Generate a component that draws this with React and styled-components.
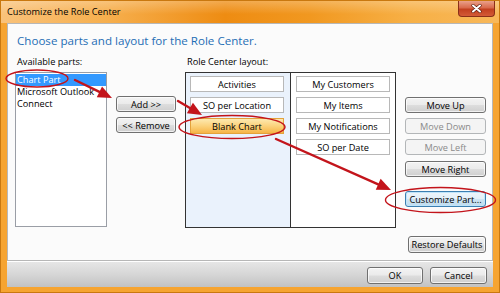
import React from 'react';
import styled, { createGlobalStyle, css } from 'styled-components';

const GlobalStyle = createGlobalStyle`
  html, body { margin: 0; padding: 0; background: #ffffff; }
  body { width: 500px; height: 293px; overflow: hidden; }
  * { box-sizing: border-box; }
`;

const Window = styled.div`
  position: relative;
  width: 500px;
  height: 293px;
  display: flex;
  flex-direction: column;
  background: #f6a431;
  border: 1px solid #c9780f;
  font-family: "Open Sans", "Noto Sans", sans-serif;
  font-size: 9.2px;
  color: #000000;
`;

const TitleBar = styled.div`
  height: 22px;
  flex: none;
  display: flex;
  justify-content: space-between;
  align-items: flex-start;
  padding: 0 4px 0 6px;
  background:
    linear-gradient(180deg, rgba(255,255,255,0.25) 0%, rgba(255,255,255,0) 60%),
    linear-gradient(90deg, #f9c27a 0%, #f6ae4c 22%, #ee8c12 45%, #f19820 62%, #f7b046 82%, #f8b85a 100%);
`;

const Title = styled.div`
  padding-top: 4px;
  font-size: 9.2px;
  line-height: 13px;
  color: #000;
`;

const CloseButton = styled.div`
  width: 37px;
  height: 16px;
  display: flex;
  align-items: center;
  justify-content: center;
  border: 1px solid #8a2f19;
  border-top: none;
  border-radius: 0 0 4px 4px;
  background: linear-gradient(180deg, #eaa08a 0%, #d86a4c 45%, #c2401f 55%, #d35b37 100%);
`;

const Client = styled.div`
  flex: none;
  height: 238px;
  margin: 0 6px;
  display: flex;
  flex-direction: column;
  background: #fbfbfb;
  border: 1px solid #b7b7b7;
  padding: 8px 6px 0 7px;
`;

const Heading = styled.div`
  margin-left: 2px;
  font-size: 11.6px;
  line-height: 18px;
  color: #1f6eb5;
`;

const Main = styled.div`
  display: flex;
  align-items: flex-start;
  margin-top: 5px;
`;

const Column = styled.div`
  flex: none;
  width: ${p => p.$width}px;
  margin-left: ${p => p.$gap || 0}px;
  display: flex;
  flex-direction: column;
`;

const Label = styled.div`
  padding-left: 2px;
  line-height: 14px;
  margin-bottom: 3px;
`;

const ListBox = styled.div`
  height: 155px;
  background: #ffffff;
  border: 1px solid #9a9ea6;
  padding-top: 1px;
`;

const ListItem = styled.div`
  line-height: 12px;
  padding-left: 1px;
  white-space: nowrap;
  ${p => p.$selected && css`
    background: #3399ff;
    color: #ffffff;
  `}
`;

const ButtonStack = styled.div`
  flex: none;
  width: ${p => p.$width}px;
  margin-left: 9px;
  padding-top: ${p => p.$top}px;
  display: flex;
  flex-direction: column;
  gap: 5px;
`;

const Button = styled.div`
  height: ${p => p.$height || 16}px;
  width: ${p => (p.$width ? `${p.$width}px` : 'auto')};
  margin-top: ${p => p.$offset || 0}px;
  display: flex;
  align-items: center;
  justify-content: center;
  white-space: nowrap;
  border: 1px solid #707070;
  border-radius: 3px;
  color: #000;
  background: linear-gradient(180deg, #f3f3f3 0%, #ebebeb 48%, #dddddd 52%, #cfcfcf 100%);
  box-shadow: inset 0 0 0 1px rgba(255,255,255,0.7);
  ${p => p.$disabled && css`
    border-color: #b3b6b8;
    color: #8a8a8a;
    background: #f4f4f4;
    box-shadow: none;
  `}
  ${p => p.$focused && css`
    border-color: #3c7fb1;
    background: linear-gradient(180deg, #eef6fb 0%, #e3eff8 48%, #cde4f3 52%, #c0dcef 100%);
    box-shadow: inset 0 0 0 1px #bfe4fa;
  `}
`;

const LayoutBox = styled.div`
  height: 156px;
  display: flex;
  border: 1px solid #333333;
  background: #ffffff;
`;

const Zone = styled.div`
  width: ${p => p.$width}px;
  flex: none;
  display: flex;
  flex-direction: column;
  gap: 5px;
  padding: 3px 0 0 ${p => p.$inset}px;
  background: ${p => (p.$tinted ? '#eaf2fc' : '#ffffff')};
  & + & { border-left: 1px solid #333333; }
`;

const Part = styled.div`
  width: 94px;
  height: 16px;
  display: flex;
  align-items: center;
  justify-content: center;
  white-space: nowrap;
  border: 1px solid #b8b8b8;
  background: #ffffff;
  ${p => p.$active && css`
    border-color: #e3a23c;
    background: linear-gradient(180deg, #fde9b0 0%, #fbd27c 50%, #f6b446 100%);
  `}
`;

const RestoreRow = styled.div`
  display: flex;
  justify-content: flex-end;
  margin-top: 8px;
`;

const Footer = styled.div`
  flex: none;
  height: 26px;
  margin: 0 6px;
  display: flex;
  justify-content: flex-end;
  align-items: flex-start;
  gap: 7px;
  padding: 5px 6px 0 0;
  border-top: 1px solid #ffffff;
  background: linear-gradient(180deg, #e6e6e6 0%, #d6d6d6 50%, #c2c2c2 100%);
`;

const Annotations = styled.svg`
  position: absolute;
  left: -1px;
  top: -1px;
  pointer-events: none;
`;

const RED = '#c3141b';

function Arrow({ x1, y1, x2, y2 }) {
  const a = Math.atan2(y2 - y1, x2 - x1);
  const len = 14;
  const half = 6;
  const bx = x2 - len * Math.cos(a);
  const by = y2 - len * Math.sin(a);
  const px = -Math.sin(a) * half;
  const py = Math.cos(a) * half;
  return (
    <g>
      <line x1={x1} y1={y1} x2={bx} y2={by} stroke={RED} strokeWidth="2.4" strokeLinecap="round" />
      <polygon points={`${x2},${y2} ${bx + px},${by + py} ${bx - px},${by - py}`} fill={RED} />
    </g>
  );
}

export default function App() {
  const available = ['Chart Part', 'Microsoft Outlook', 'Connect'];
  const left = ['Activities', 'SO per Location', 'Blank Chart'];
  const right = ['My Customers', 'My Items', 'My Notifications', 'SO per Date'];

  return (
    <>
      <GlobalStyle />
      <Window>
        <TitleBar>
          <Title>Customize the Role Center</Title>
          <CloseButton>
            <svg width="11" height="9" viewBox="0 0 11 9">
              <path d="M2 1.5 L9 7.5 M9 1.5 L2 7.5" stroke="#5a1a0c" strokeWidth="3.2" strokeLinecap="round" />
              <path d="M2 1.5 L9 7.5 M9 1.5 L2 7.5" stroke="#ffffff" strokeWidth="2" strokeLinecap="round" />
            </svg>
          </CloseButton>
        </TitleBar>

        <Client>
          <Heading>Choose parts and layout for the Role Center.</Heading>
          <Main>
            <Column $width={92}>
              <Label>Available parts:</Label>
              <ListBox>
                {available.map((name, i) => (
                  <ListItem key={name} $selected={i === 0}>{name}</ListItem>
                ))}
              </ListBox>
            </Column>

            <ButtonStack $width={60} $top={41}>
              <Button>Add &gt;&gt;</Button>
              <Button>&lt;&lt; Remove</Button>
            </ButtonStack>

            <Column $width={211} $gap={9}>
              <Label>Role Center layout:</Label>
              <LayoutBox>
                <Zone $width={104} $inset={4} $tinted>
                  {left.map(name => (
                    <Part key={name} $active={name === 'Blank Chart'}>{name}</Part>
                  ))}
                </Zone>
                <Zone $width={105} $inset={5}>
                  {right.map(name => <Part key={name}>{name}</Part>)}
                </Zone>
              </LayoutBox>
            </Column>

            <ButtonStack $width={81} $top={42}>
              <Button>Move Up</Button>
              <Button $disabled>Move Down</Button>
              <Button $disabled>Move Left</Button>
              <Button $offset={1}>Move Right</Button>
              <Button $offset={9} $focused>Customize Part...</Button>
            </ButtonStack>
          </Main>

          <RestoreRow>
            <Button $width={78} $height={17}>Restore Defaults</Button>
          </RestoreRow>
        </Client>

        <Footer>
          <Button $width={56} $height={17}>OK</Button>
          <Button $width={57} $height={17}>Cancel</Button>
        </Footer>

        <Annotations width="500" height="293" viewBox="0 0 500 293">
          <ellipse cx="37" cy="78.5" rx="31" ry="8.5" fill="none" stroke={RED} strokeWidth="1.4" />
          <ellipse cx="232" cy="127" rx="53" ry="11.5" fill="none" stroke={RED} strokeWidth="1.4" />
          <ellipse cx="440.5" cy="200" rx="55" ry="12.5" fill="none" stroke={RED} strokeWidth="1.4" />
          <Arrow x1={75} y1={80} x2={112} y2={98} />
          <Arrow x1={178} y1={101} x2={202} y2={115} />
          <Arrow x1={276} y1={139} x2={391} y2={190} />
        </Annotations>
      </Window>
    </>
  );
}
